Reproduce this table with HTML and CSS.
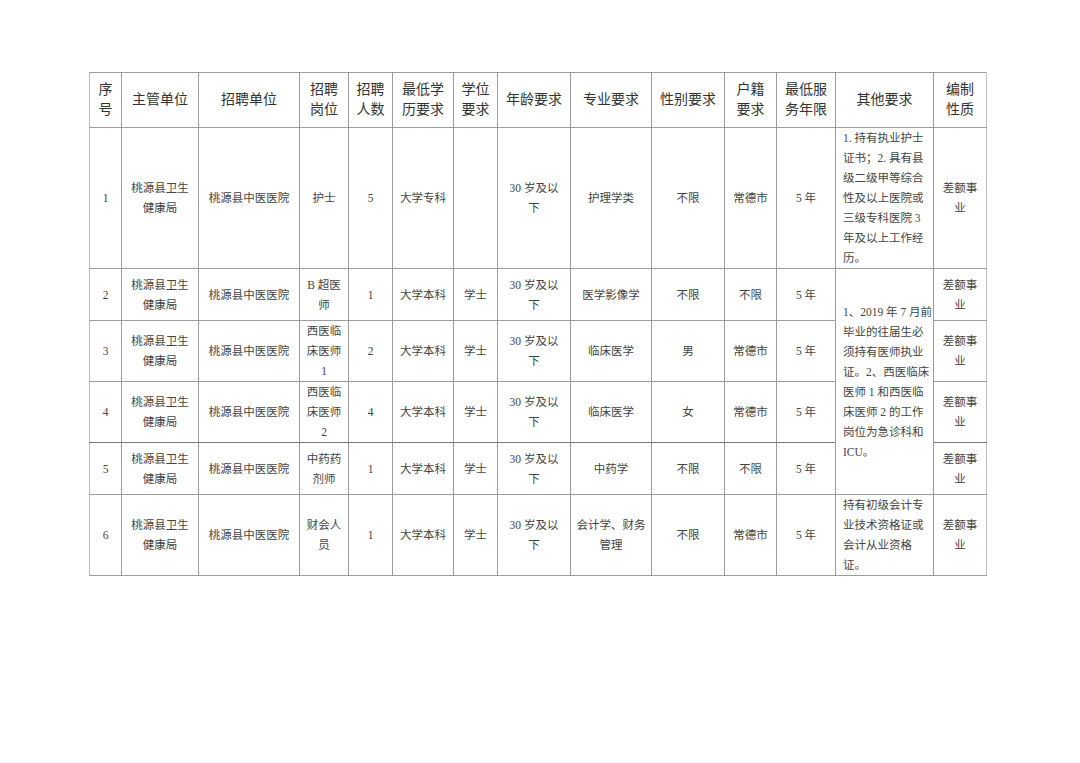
FILE: index.html
```html
<!DOCTYPE html>
<html lang="zh-CN">
<head>
<meta charset="utf-8">
<title>招聘计划表</title>
<link rel="stylesheet" href="styles.css">
</head>
<body>
<div class="page">
<table class="jobs">
<colgroup>
<col class="c1"><col class="c2"><col class="c3"><col class="c4"><col class="c5"><col class="c6"><col class="c7"><col class="c8"><col class="c9"><col class="c10"><col class="c11"><col class="c12"><col class="c13"><col class="c14">
</colgroup>
<thead>
<tr class="rh">
<th>序<br>号</th>
<th>主管单位</th>
<th>招聘单位</th>
<th>招聘<br>岗位</th>
<th class="dl">招聘<br>人数</th>
<th>最低学<br>历要求</th>
<th>学位<br>要求</th>
<th class="dl">年龄要求</th>
<th>专业要求</th>
<th>性别要求</th>
<th>户籍<br>要求</th>
<th>最低服<br>务年限</th>
<th>其他要求</th>
<th>编制<br>性质</th>
</tr>
</thead>
<tbody>
<tr class="r1">
<td>1</td>
<td>桃源县卫生<br>健康局</td>
<td>桃源县中医医院</td>
<td>护士</td>
<td class="dl">5</td>
<td>大学专科</td>
<td></td>
<td class="dl">30 岁及以<br>下</td>
<td>护理学类</td>
<td>不限</td>
<td>常德市</td>
<td>5 年</td>
<td class="other">1. 持有执业护士<br>证书；2. 具有县<br>级二级甲等综合<br>性及以上医院或<br>三级专科医院 3<br>年及以上工作经<br>历。</td>
<td>差额事<br>业</td>
</tr>
<tr class="r2">
<td>2</td>
<td>桃源县卫生<br>健康局</td>
<td>桃源县中医医院</td>
<td>B 超医<br>师</td>
<td class="dl">1</td>
<td>大学本科</td>
<td>学士</td>
<td class="dl">30 岁及以<br>下</td>
<td>医学影像学</td>
<td>不限</td>
<td>不限</td>
<td>5 年</td>
<td class="other" rowspan="4">1、2019 年 7 月前<br>毕业的往届生必<br>须持有医师执业<br>证。2、西医临床<br>医师 1 和西医临<br>床医师 2 的工作<br>岗位为急诊科和<br>ICU。</td>
<td>差额事<br>业</td>
</tr>
<tr class="r3">
<td>3</td>
<td>桃源县卫生<br>健康局</td>
<td>桃源县中医医院</td>
<td>西医临<br>床医师<br>1</td>
<td class="dl">2</td>
<td>大学本科</td>
<td>学士</td>
<td class="dl">30 岁及以<br>下</td>
<td>临床医学</td>
<td>男</td>
<td>常德市</td>
<td>5 年</td>
<td>差额事<br>业</td>
</tr>
<tr class="r4">
<td>4</td>
<td>桃源县卫生<br>健康局</td>
<td>桃源县中医医院</td>
<td>西医临<br>床医师<br>2</td>
<td class="dl">4</td>
<td>大学本科</td>
<td>学士</td>
<td class="dl">30 岁及以<br>下</td>
<td>临床医学</td>
<td>女</td>
<td>常德市</td>
<td>5 年</td>
<td>差额事<br>业</td>
</tr>
<tr class="r5">
<td>5</td>
<td>桃源县卫生<br>健康局</td>
<td>桃源县中医医院</td>
<td>中药药<br>剂师</td>
<td class="dl">1</td>
<td>大学本科</td>
<td>学士</td>
<td class="dl">30 岁及以<br>下</td>
<td>中药学</td>
<td>不限</td>
<td>不限</td>
<td>5 年</td>
<td>差额事<br>业</td>
</tr>
<tr class="r6">
<td>6</td>
<td>桃源县卫生<br>健康局</td>
<td>桃源县中医医院</td>
<td>财会人<br>员</td>
<td class="dl">1</td>
<td>大学本科</td>
<td>学士</td>
<td class="dl">30 岁及以<br>下</td>
<td>会计学、财务<br>管理</td>
<td>不限</td>
<td>常德市</td>
<td>5 年</td>
<td class="other">持有初级会计专<br>业技术资格证或<br>会计从业资格<br>证。</td>
<td>差额事<br>业</td>
</tr>
</tbody>
</table>
</div>
</body>
</html>
```

FILE: styles.css
```css
html, body {
  margin: 0;
  padding: 0;
  background: #ffffff;
}

.page {
  width: 1080px;
  height: 763px;
  padding: 72px 0 0 89px;
  box-sizing: border-box;
}

.jobs {
  border-collapse: collapse;
  table-layout: fixed;
  width: 898px;
  font-family: "Liberation Serif", "Noto Sans CJK SC", serif;
  color: #444;
  border-top: 1px solid #cfcfcf;
  border-bottom: 1px solid #555;
}

.c1 { width: 32px; }
.c2 { width: 77px; }
.c3 { width: 101px; }
.c4 { width: 49px; }
.c5 { width: 44px; }
.c6 { width: 61px; }
.c7 { width: 44px; }
.c8 { width: 73px; }
.c9 { width: 81px; }
.c10 { width: 73px; }
.c11 { width: 52px; }
.c12 { width: 59px; }
.c13 { width: 98px; }
.c14 { width: 53px; }

.jobs th,
.jobs td {
  border: 1px solid #9c9c9c;
  padding: 0;
  text-align: center;
  vertical-align: middle;
  white-space: nowrap;
  line-height: 20px;
}

.jobs th {
  font-size: 14px;
  font-weight: normal;
  color: #333;
}

.jobs td {
  font-size: 11.5px;
}

.jobs .dl {
  border-left: 1px solid #6a6a6a;
}

.jobs td.other {
  text-align: left;
  padding-left: 7px;
}

.jobs th:first-child,
.jobs td:first-child {
  border-left-color: #bdbdbd;
}

.jobs th:last-child,
.jobs td:last-child {
  border-right-color: #bdbdbd;
}

.rh { height: 55px; }
.r1 { height: 139px; }
.r2 { height: 52px; }
.r3 { height: 61px; }
.r4 { height: 61px; }
.r5 { height: 52px; }
.r6 { height: 79px; }

.r4 td {
  border-bottom-color: #777;
}
```
